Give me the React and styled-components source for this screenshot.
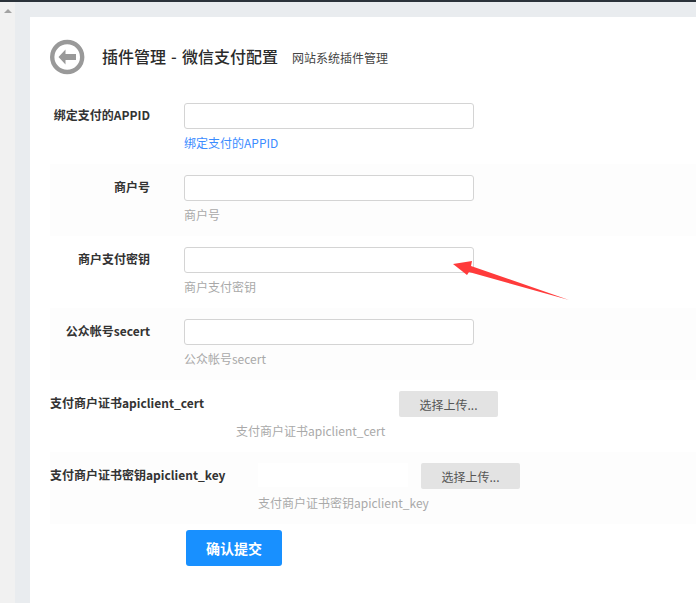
import React from "react";
import styled, { createGlobalStyle } from "styled-components";

const Global = createGlobalStyle`
  html, body {
    margin: 0;
    padding: 0;
    background: #e9ecef;
    font-family: "Noto Sans CJK SC", "Open Sans", sans-serif;
  }
  #root { overflow: hidden; }
`;

const Page = styled.div`
  width: 696px;
  height: 603px;
  display: flex;
  flex-direction: column;
  overflow: hidden;
`;

const TopBar = styled.div`
  height: 2px;
  background: #2b323a;
  flex: none;
`;

const Body = styled.div`
  flex: 1;
  display: flex;
  min-height: 0;
`;

const ScrollTrack = styled.div`
  width: 15px;
  flex: none;
  background: #f1f1f1;
  padding-top: 7px;
  display: flex;
  justify-content: center;
  align-items: flex-start;
`;

const ScrollArrow = styled.div`
  width: 0;
  height: 0;
  border-left: 4px solid transparent;
  border-right: 4px solid transparent;
  border-bottom: 4px solid #a3a3a3;
`;

const Main = styled.div`
  flex: 1;
  padding: 15px 0 0 15px;
`;

const Panel = styled.div`
  background: #fff;
  height: 100%;
  padding: 19px 0 0 20px;
  box-sizing: border-box;
`;

const Header = styled.div`
  display: flex;
  align-items: center;
  height: 42px;
  margin-bottom: 14px;
`;

const BackIcon = styled.svg`
  width: 36px;
  height: 36px;
  flex: none;
  margin-right: 16px;
`;

const Title = styled.h1`
  margin: 0 14px 2px 0;
  font-size: 16px;
  font-weight: 500;
  word-spacing: 1.5px;
  color: #2b2b2b;
`;

const SubTitle = styled.span`
  font-size: 12px;
  color: #444;
`;

const Row = styled.div`
  height: 72px;
  box-sizing: border-box;
  padding-top: 11px;
  display: flex;
  background: ${(p) => (p.$striped ? "#fdfdfd" : "#fff")};
`;

const Label = styled.label`
  width: 100px;
  margin-right: 34px;
  text-align: right;
  font-size: 12px;
  font-weight: 700;
  line-height: 24px;
  color: #333;
  flex: none;
`;

const Field = styled.div`
  display: flex;
  flex-direction: column;
`;

const TextInput = styled.input`
  width: 290px;
  height: 26px;
  box-sizing: border-box;
  border: 1px solid #d4d4d4;
  border-radius: 3px;
  background: #fff;
  outline: none;
`;

const Hint = styled.div`
  margin-top: 5px;
  font-size: 12px;
  line-height: 18px;
  color: ${(p) => (p.$link ? "#3b8cff" : "#a9a9a9")};
`;

const UploadRow = styled.div`
  height: 72px;
  box-sizing: border-box;
  padding-top: 11px;
  background: ${(p) => (p.$striped ? "#fdfdfd" : "#fff")};
`;

const UploadLine = styled.div`
  display: flex;
  align-items: flex-start;
`;

const UploadLabel = styled.label`
  font-size: 12px;
  font-weight: 700;
  line-height: 24px;
  color: #333;
  flex: none;
  width: ${(p) => p.$width}px;
`;

const FileName = styled.div`
  width: 150px;
  height: 24px;
  margin-right: 13px;
  background: #fff;
  flex: none;
`;

const UploadButton = styled.button`
  width: 99px;
  height: 26px;
  border: 0;
  border-radius: 2px;
  background: #e3e3e3;
  color: #555;
  font: 12px "Noto Sans CJK SC", sans-serif;
  padding: 0;
`;

const UploadHint = styled(Hint)`
  margin-left: ${(p) => p.$indent}px;
`;

const SubmitBar = styled.div`
  padding: 6px 0 0 136px;
`;

const SubmitButton = styled.button`
  width: 96px;
  height: 36px;
  border: 0;
  border-radius: 3px;
  background: #1890ff;
  color: #fff;
  font: 700 14px "Noto Sans CJK SC", sans-serif;
`;

const Arrow = styled.svg`
  position: absolute;
  left: 450px;
  top: 255px;
  width: 125px;
  height: 50px;
`;

export default function App() {
  return (
    <Page>
      <Global />
      <TopBar />
      <Body>
        <ScrollTrack>
          <ScrollArrow />
        </ScrollTrack>
        <Main>
          <Panel>
            <Header>
              <BackIcon viewBox="0 0 36 36">
                <circle cx="17.2" cy="18" r="15" fill="#fff" stroke="#999" strokeWidth="4.4" />
                <path d="M8.5 18 L15.5 10.5 V15 H26 V21 H15.5 V25.5 Z" fill="#999" />
              </BackIcon>
              <Title>插件管理 - 微信支付配置</Title>
              <SubTitle>网站系统插件管理</SubTitle>
            </Header>

            <Row>
              <Label>绑定支付的APPID</Label>
              <Field>
                <TextInput />
                <Hint $link>绑定支付的APPID</Hint>
              </Field>
            </Row>
            <Row $striped>
              <Label>商户号</Label>
              <Field>
                <TextInput />
                <Hint>商户号</Hint>
              </Field>
            </Row>
            <Row>
              <Label>商户支付密钥</Label>
              <Field>
                <TextInput />
                <Hint>商户支付密钥</Hint>
              </Field>
            </Row>
            <Row $striped>
              <Label>公众帐号secert</Label>
              <Field>
                <TextInput />
                <Hint>公众帐号secert</Hint>
              </Field>
            </Row>

            <UploadRow>
              <UploadLine>
                <UploadLabel $width={349}>支付商户证书apiclient_cert</UploadLabel>
                <UploadButton>选择上传...</UploadButton>
              </UploadLine>
              <UploadHint $indent={186}>支付商户证书apiclient_cert</UploadHint>
            </UploadRow>
            <UploadRow $striped>
              <UploadLine>
                <UploadLabel $width={208}>支付商户证书密钥apiclient_key</UploadLabel>
                <FileName />
                <UploadButton>选择上传...</UploadButton>
              </UploadLine>
              <UploadHint $indent={208}>支付商户证书密钥apiclient_key</UploadHint>
            </UploadRow>

            <SubmitBar>
              <SubmitButton>确认提交</SubmitButton>
            </SubmitBar>
          </Panel>
        </Main>
      </Body>
      <Arrow viewBox="0 0 125 50">
        <path d="M3 9 L22 6 L21 11 L119 45 L19 17 L17 20 Z" fill="#ff3b3b" />
      </Arrow>
    </Page>
  );
}
